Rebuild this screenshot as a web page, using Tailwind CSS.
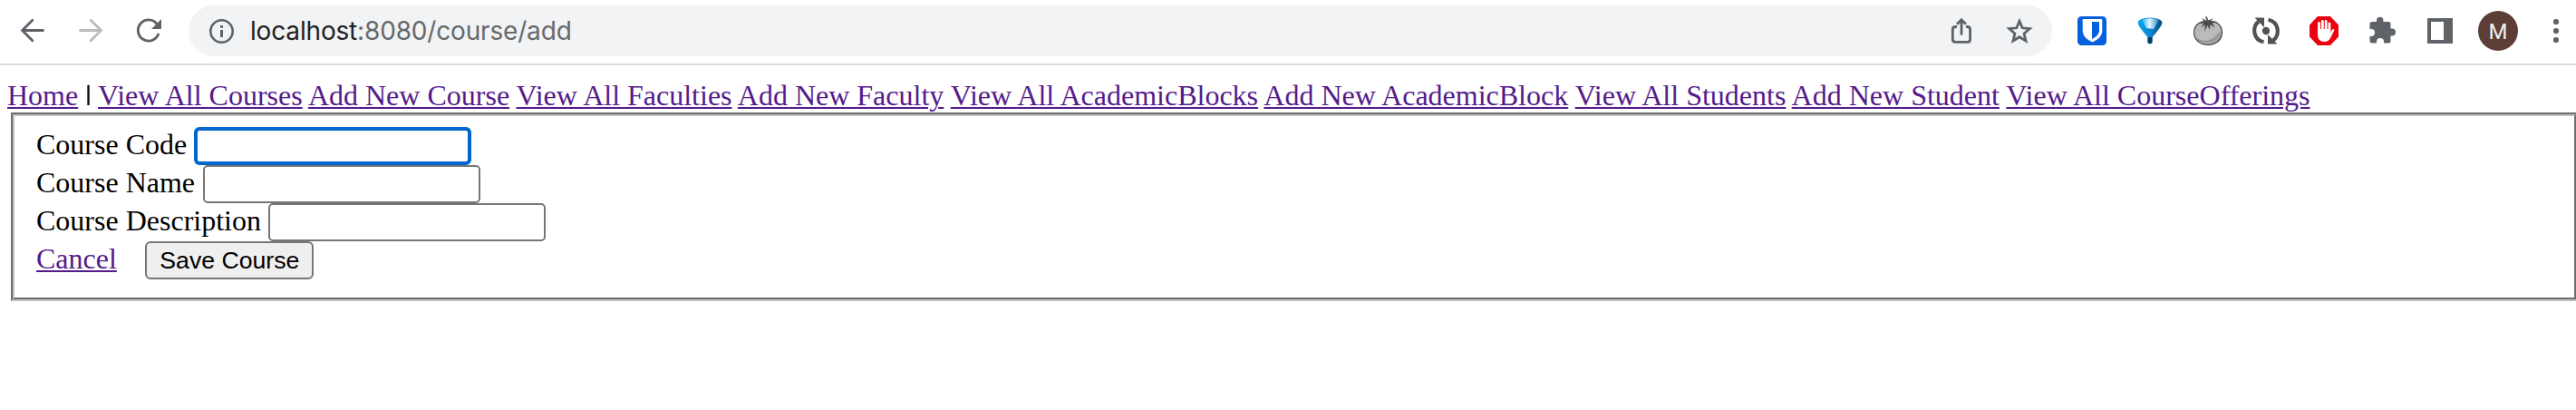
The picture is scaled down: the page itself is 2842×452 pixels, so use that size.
<!DOCTYPE html>
<html lang="en">
<head>
<meta charset="utf-8">
<title>Add Course</title>
<script src="https://cdn.jsdelivr.net/npm/@tailwindcss/browser@4"></script>
</head>
<body class="bg-white w-[2842px] h-[452px] overflow-hidden">
<header class="h-[72px] border-b-2 border-[#dcdcdc] flex items-start">
  <div class="flex w-[208px] h-[70px] shrink-0">
    <svg class="w-[208px] h-[70px]" viewBox="0 0 208 70" fill="none" stroke-width="2.900" stroke-linecap="round">
      <path d="M47.500 33.500H25M35.800 22.300L24.600 33.500L35.800 44.700" stroke="#5f6368"/>
      <path d="M88.500 33.500H111M100.200 22.300L111.400 33.500L100.200 44.700" stroke="#babcbe"/>
      <path d="M173 26.300A11.600 11.600 0 1 0 174.600 38" stroke="#5f6368"/>
      <path d="M178 21V32H167Z" fill="#5f6368"/>
    </svg>
  </div>
  <div class="mt-[6px] w-[2056px] h-14 rounded-full bg-[#f1f3f4] flex items-center shrink-0">
    <svg class="ml-[22px] w-7 h-7 shrink-0" viewBox="0 0 28 28" fill="none"><circle cx="14.500" cy="14.500" r="12.200" stroke="#5f6368" stroke-width="2.600"/><path d="M14.500 13V21M14.500 8V10.800" stroke="#5f6368" stroke-width="3"/></svg>
    <div class="ml-[18px] text-[28px] leading-8 font-['Inter',sans-serif] tracking-[-0.17px] text-[#66696c] whitespace-nowrap"><span class="text-[#202124]">localhost</span>:8080/course/add</div>
    <svg class="ml-auto mr-[20px] w-[94px] h-8" viewBox="0 0 94 32" fill="none" stroke="#5f6368" stroke-width="2.800">
      <path d="M9 11.500H7.500Q4.300 11.500 4.300 14.500V25.500Q4.300 28.300 7.500 28.300H20.500Q23.600 28.300 23.600 25.500V14.500Q23.600 11.500 20.500 11.500H19M14 20.500V4.500M9 8.800L14 3.800L19 8.800"/>
      <path d="M78 5.300L81.200 12.800L89.300 13.500L83.100 18.900L85 27L78 22.700L71 27L72.900 18.900L66.700 13.500L74.800 12.800Z"/>
    </svg>
  </div>
  <svg class="w-[578px] h-[70px] shrink-0" viewBox="2264 0 578 70">
    <defs>
      <linearGradient id="funnel" x1="0" x2="1" y1="0" y2="0"><stop offset="0" stop-color="#08a5ee"/><stop offset=".5" stop-color="#0d86d2"/><stop offset="1" stop-color="#034779"/></linearGradient>
      <linearGradient id="rim" x1="0" x2="1" y1="0" y2="0"><stop offset="0" stop-color="#18b4f5"/><stop offset=".45" stop-color="#e8f7ff"/><stop offset="1" stop-color="#1c83cc"/></linearGradient>
      <linearGradient id="tomato" x1="0" x2="1" y1="0" y2="1"><stop offset="0" stop-color="#b5b5b5"/><stop offset=".6" stop-color="#bcbcbc"/><stop offset="1" stop-color="#858585"/></linearGradient>
    </defs>
    <rect x="2292" y="18" width="32" height="32" rx="4.500" fill="#0560dc"/>
    <path d="M2299 21H2318Q2319.300 21 2319.300 22.300V33.500C2319.300 39.500 2315 43.500 2308.500 46.500C2302 43.500 2297.700 39.500 2297.700 33.500V22.300Q2297.700 21 2299 21Z" fill="#fff"/>
    <path d="M2308 24H2316V33.500C2316 37.500 2313 40.500 2308 43Z" fill="#0560dc"/>
    <path d="M2358.500 25Q2359 20 2372 19.500Q2385 20 2385.500 25Q2385 29 2374.500 41V47Q2372 49.500 2369.500 47V41Q2359 29 2358.500 25Z" fill="url(#funnel)"/>
    <path d="M2363 22Q2367 20.200 2372 20.200Q2379 20.300 2382 22L2376 32L2368 31Z" fill="url(#rim)"/>
    <path d="M2369.500 41H2374.500V47Q2372 49.500 2369.500 47Z" fill="#043d68"/>
    <path d="M2436 23.500C2444 22.500 2451.500 27 2451.500 35.500C2451.500 44.500 2444.500 49.300 2436 49.300C2427.500 49.300 2420.600 44.500 2420.600 35.500C2420.600 27 2428 22.500 2436 23.500Z" fill="url(#tomato)" stroke="#444" stroke-width="1.200"/>
    <path d="M2424 43C2429 47 2443 48 2449 36" stroke="#898989" stroke-width="1.500" fill="none"/>
    <path d="M2433 19L2435 23L2429 20L2432 24L2424.500 25.500L2431 26L2428.500 30L2433 27.500L2432 35L2435.500 28L2438 33L2438.500 27L2443.500 30.500L2441 25.500L2447 24L2439 23L2442 20L2436.500 22.500L2434.500 18Z" fill="#4a4a4a"/>
    <g fill="none" stroke="#505254" stroke-width="4.200"><path d="M2497.500 46.300C2486 44 2484 30 2492 23.500"/><path d="M2502.500 21.700C2514 24 2516 38 2508 44.500"/></g>
    <path d="M2487.500 19.500H2498V30ZM2512.500 48.500H2502V38Z" fill="#505254"/><circle cx="2500" cy="34" r="4.200" fill="#505254"/>
    <path d="M2557 18H2571L2580 27.500V40.500L2571 50H2557L2548 40.500V27.500Z" fill="#ea0410"/>
    <g fill="none" stroke="#fff" stroke-linecap="round"><path d="M2558.500 25.500V36M2562.300 23.500V36M2566.100 23.500V36M2569.900 26V36" stroke-width="2.800"/></g>
    <path d="M2557.100 32L2571.300 32V36.500L2573 32.500Q2575 31.700 2575.500 33L2571 42Q2569 46 2564.500 46Q2557.100 46 2557.100 39Z" fill="#fff"/>
    <path d="M2617 24H2622V22.500A3.700 3.700 0 0 1 2629.400 22.500V24H2635.500Q2637.500 24 2637.500 26V31.500H2639A3.800 3.800 0 0 1 2639 39.500H2637.500V45Q2637.500 47.500 2635 47.500H2630V46A4 4 0 0 0 2622 46V47.500H2617Q2614.500 47.500 2614.500 45V40H2616A4 4 0 0 0 2616 32H2614.500V26.500Q2614.500 24 2617 24Z" fill="#5f6368"/>
    <path fill-rule="evenodd" d="M2678 20H2706V48H2678ZM2682 24V44H2696V24Z" fill="#5f6368"/>
    <circle cx="2756" cy="34" r="22" fill="#5c3e36"/>
    <text x="2756" y="42.800" text-anchor="middle" fill="#f3efee" class="text-[24px] font-['Roboto',sans-serif]">M</text>
    <g fill="#5f6368"><circle cx="2820" cy="24" r="3.100"/><circle cx="2820" cy="34" r="3.100"/><circle cx="2820" cy="44" r="3.100"/></g>
  </svg>
</header>
<main class="font-['Liberation_Serif',serif] text-[32px] leading-[36px] text-black">
  <nav class="pl-2 pt-[15px] h-[52px] whitespace-nowrap [&_a]:text-[#551a8b] [&_a]:underline [&_a]:decoration-2 [&_a]:underline-offset-2">
    <a href="#">Home</a> <span class="inline-block [clip-path:inset(0_0_7px_0)] [-webkit-text-stroke:0.6px_black]">|</span>
    <a href="#">View All Courses</a>
    <a href="#">Add New Course</a>
    <a href="#">View All Faculties</a>
    <a href="#">Add New Faculty</a>
    <a href="#">View All AcademicBlocks</a>
    <a href="#">Add New AcademicBlock</a>
    <a href="#">View All Students</a>
    <a href="#">Add New Student</a>
    <a href="#">View All CourseOfferings</a>
  </nav>
  <form class="ml-3 w-[2832px] h-[208px] border-2 border-[#6d6d6d] border-r-[#c0c0c0] border-b-[#c0c0c0]">
    <div class="h-full border-2 border-[#c0c0c0] border-b-[#6d6d6d] border-r-[#6d6d6d] pl-6 pt-3">
      <div class="flex items-center h-[42px]"><label for="code" class="pb-[4px]">Course Code</label><input id="code" class="ml-2 w-[306px] h-[42px] border-4 border-[#0065cc] rounded-[6px] outline-none"></div>
      <div class="flex items-center h-[42px]"><label for="name" class="pb-[4px]">Course Name</label><input id="name" class="ml-[9px] w-[306px] h-[42px] border-2 border-[#767676] rounded-[5px] outline-none"></div>
      <div class="flex items-center h-[42px]"><label for="desc" class="pb-[4px]">Course Description</label><input id="desc" class="ml-[8px] w-[306px] h-[42px] border-2 border-[#767676] rounded-[5px] outline-none"></div>
      <div class="flex items-center h-[42px]"><a href="#" class="pb-[4px] text-[#551a8b] underline decoration-2 underline-offset-2">Cancel</a><button type="button" class="ml-[31px] w-[186px] h-[42px] pl-px border-2 border-[#767676] rounded-[6px] bg-[#efefef] font-['Liberation_Sans',sans-serif] text-[26.670px] leading-[30px] whitespace-nowrap">Save Course</button></div>
    </div>
  </form>
</main>
</body>
</html>
